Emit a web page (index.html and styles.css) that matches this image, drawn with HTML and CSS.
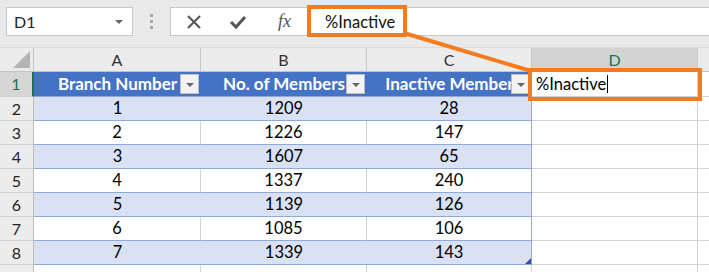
FILE: index.html
```html
<!DOCTYPE html>
<html>
<head>
<meta charset="utf-8">
<link rel="stylesheet" href="styles.css">
</head>
<body>
<div class="page">
  <div class="toolbar">
    <div class="namebox">
      <span class="nb-text">D1</span>
      <span class="nb-arrow"></span>
    </div>
    <div class="sep"><i></i><i></i><i></i></div>
    <div class="fbox">
      <div class="ficons">
        <svg class="ic" width="18" height="16" viewBox="0 0 18 16"><path d="M3 2 L15 14 M15 2 L3 14" stroke="#555" stroke-width="2" fill="none"/></svg>
        <svg class="ic" width="18" height="16" viewBox="0 0 18 16"><path d="M2 8 L7 13 L16 3" stroke="#555" stroke-width="3" fill="none"/></svg>
        <span class="fx">fx</span>
      </div>
      <div class="ftext">%Inactive</div>
    </div>
  </div>
  <div class="sheet">
    <div class="corner"><span class="tri"></span></div>
    <div class="ch">A</div>
    <div class="ch">B</div>
    <div class="ch">C</div>
    <div class="ch sel">D</div>
    <div class="ch last"></div>

    <div class="rh selrow">1</div>
    <div class="th">Branch Number<span class="flt"></span></div>
    <div class="th">No. of Members<span class="flt"></span></div>
    <div class="th">Inactive Member<span class="flt"></span></div>
    <div class="cell active">%Inactive<span class="caret"></span></div>
    <div class="cell last"></div>

    <div class="rh">2</div>
    <div class="td band">1</div><div class="td band">1209</div><div class="td band cr">28</div>
    <div class="cell"></div><div class="cell last"></div>

    <div class="rh">3</div>
    <div class="td plain">2</div><div class="td plain">1226</div><div class="td plain cr">147</div>
    <div class="cell"></div><div class="cell last"></div>

    <div class="rh">4</div>
    <div class="td band">3</div><div class="td band">1607</div><div class="td band cr">65</div>
    <div class="cell"></div><div class="cell last"></div>

    <div class="rh">5</div>
    <div class="td plain">4</div><div class="td plain">1337</div><div class="td plain cr">240</div>
    <div class="cell"></div><div class="cell last"></div>

    <div class="rh">6</div>
    <div class="td band">5</div><div class="td band">1139</div><div class="td band cr">126</div>
    <div class="cell"></div><div class="cell last"></div>

    <div class="rh">7</div>
    <div class="td plain">6</div><div class="td plain">1085</div><div class="td plain cr">106</div>
    <div class="cell"></div><div class="cell last"></div>

    <div class="rh">8</div>
    <div class="td band">7</div><div class="td band">1339</div><div class="td band cr">143<span class="resize"></span></div>
    <div class="cell"></div><div class="cell last"></div>

    <div class="rh"></div>
    <div class="cell"></div><div class="cell"></div><div class="cell"></div>
    <div class="cell"></div><div class="cell last"></div>
  </div>
  <svg class="overlay" width="709" height="272" viewBox="0 0 709 272">
    <rect x="309" y="7" width="96" height="28" fill="none" stroke="#f47c20" stroke-width="4"/>
    <line x1="404" y1="33" x2="531" y2="71" stroke="#f47c20" stroke-width="4"/>
    <rect x="530" y="70" width="170" height="29" fill="none" stroke="#f47c20" stroke-width="4"/>
  </svg>
</div>
</body>
</html>
```
FILE: styles.css
```css
* { box-sizing: border-box; }
html, body { margin: 0; padding: 0; background: #fff; }
body { font-family: Lato, "Noto Sans", sans-serif; color: #000; overflow: hidden; }
.page { position: relative; width: 709px; height: 272px; overflow: hidden; }

.toolbar {
  height: 48px;
  background: #e9e9e9;
  display: flex;
  align-items: flex-start;
  padding-top: 7px;
  border-bottom: 1px solid #dcdcdc;
}
.namebox {
  margin-left: 6px;
  width: 127px;
  height: 29px;
  background: #fff;
  border: 1px solid #c8c8c8;
  display: flex;
  align-items: center;
  justify-content: space-between;
  padding: 0 9px 0 7px;
}
.nb-text { font-size: 16px; color: #222; }
.nb-arrow {
  width: 0; height: 0;
  border-left: 4px solid transparent;
  border-right: 4px solid transparent;
  border-top: 4px solid #666;
}
.sep {
  width: 37px;
  height: 29px;
  display: flex;
  flex-direction: column;
  align-items: center;
  justify-content: center;
  gap: 3px;
}
.sep i { display: block; width: 3px; height: 3px; background: #a8a8a8; }
.fbox {
  flex: 1;
  height: 29px;
  background: #fff;
  border: 1px solid #c8c8c8;
  border-right: none;
  display: flex;
  align-items: center;
}
.ficons {
  width: 138px;
  display: flex;
  align-items: center;
  padding-left: 14px;
}
.ic { display: block; margin-right: 26px; }
.ic + .ic { margin-right: 31px; }
.fx {
  font-family: "Liberation Serif", serif;
  font-style: italic;
  font-size: 18px;
  color: #555;
}
.ftext { font-size: 16.5px; color: #111; padding-left: 16px; }

.sheet {
  display: grid;
  grid-template-columns: 34px 167px 166px 165px 166px 1fr;
  grid-template-rows: 24px 25px repeat(7, 24px) 24px;
}
.corner {
  background: #ececec;
  border-right: 1px solid #c4c4c4;
  border-bottom: 1px solid #c4c4c4;
  position: relative;
}
.tri {
  position: absolute;
  right: 3px;
  bottom: 3px;
  width: 0; height: 0;
  border-left: 17px solid transparent;
  border-bottom: 17px solid #b4b4b4;
}
.ch {
  background: #ececec;
  border-right: 1px solid #c9c9c9;
  border-bottom: 1px solid #c4c4c4;
  text-align: center;
  font-size: 16px;
  line-height: 23px;
  color: #333;
}
.ch.sel { background: #d3d3d3; color: #217346; border-bottom: 2px solid #217346; }
.ch.last, .cell.last { border-right: none; }
.rh {
  background: #ececec;
  border-right: 1px solid #bdbdbd;
  border-bottom: 1px solid #d0d0d0;
  text-align: center;
  font-size: 16px;
  line-height: 23px;
  color: #222;
}
.rh.selrow { background: #d6d6d6; color: #217346; border-right: 2px solid #217346; line-height: 24px; }
.th {
  background: #4472c4;
  color: #fff;
  font-weight: bold;
  font-size: 17px;
  text-align: center;
  line-height: 24px;
  position: relative;
  border-bottom: 1px solid #8ea9db;
  white-space: nowrap;
  overflow: hidden;
}
.flt {
  position: absolute;
  right: 2px;
  top: 2px;
  width: 19px;
  height: 20px;
  background: #f3f3f3;
  border: 1px solid #bdbdbd;
}
.flt::after {
  content: "";
  position: absolute;
  left: 5px;
  top: 8px;
  border-left: 4px solid transparent;
  border-right: 4px solid transparent;
  border-top: 4px solid #666;
}
.td {
  text-align: center;
  font-size: 16.5px;
  line-height: 23px;
  border-bottom: 1px solid #8ea9db;
  position: relative;
}
.band { background: #d9e1f2; }
.plain { background: #fff; border-right: 1px solid #d4d4d4; }
.cr { border-right: 1px solid #8ea9db; }
.resize {
  position: absolute;
  right: 0;
  bottom: 0;
  width: 0; height: 0;
  border-left: 6px solid transparent;
  border-bottom: 6px solid #3a4ea0;
}
.cell {
  background: #fff;
  border-right: 1px solid #d4d4d4;
  border-bottom: 1px solid #d4d4d4;
}
.cell.active {
  font-size: 16.5px;
  line-height: 24px;
  padding-left: 4px;
  display: flex;
  align-items: center;
}
.caret { display: inline-block; width: 1px; height: 18px; background: #000; margin-left: 1px; }

.overlay { position: absolute; left: 0; top: 0; pointer-events: none; }
```
